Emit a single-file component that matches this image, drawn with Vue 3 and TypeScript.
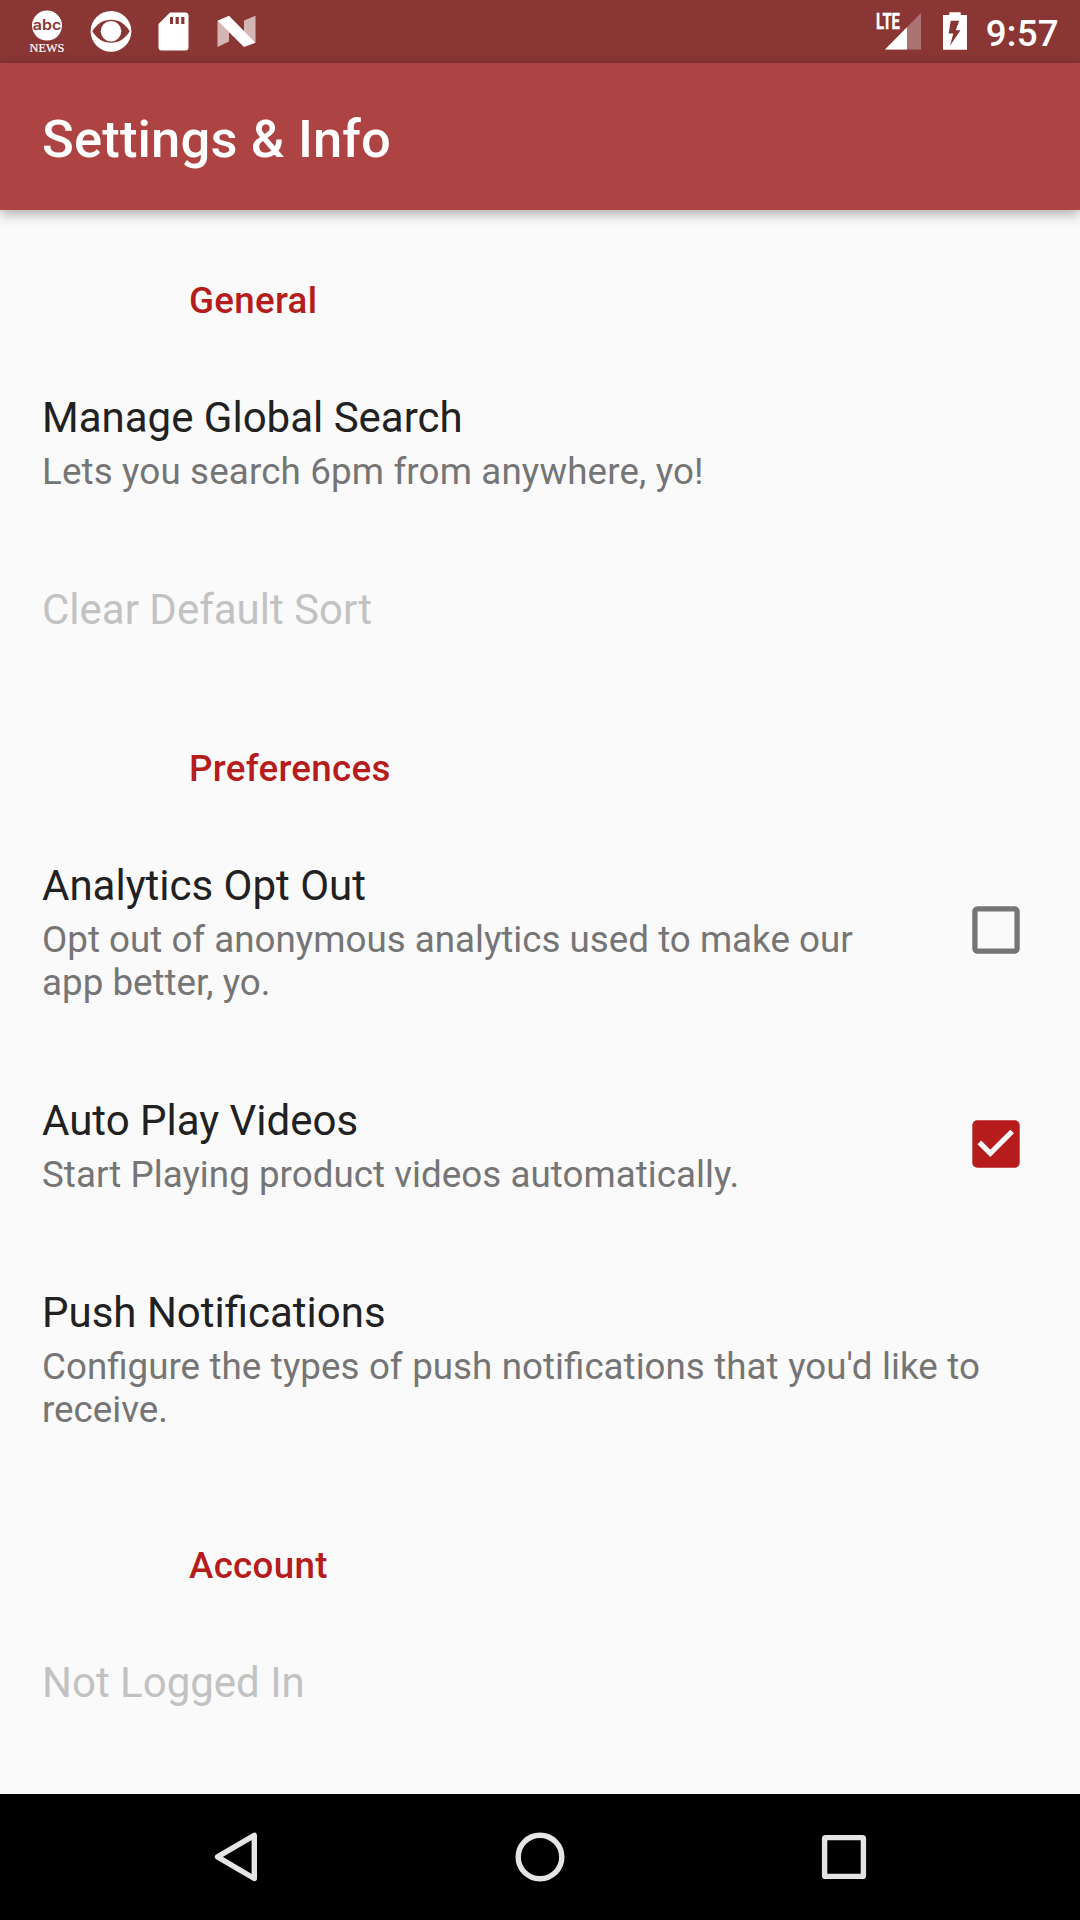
<script setup lang="ts">
interface Preference {
  title: string
  summary?: string
  disabled?: boolean
  checked?: boolean
  letterSpacing?: string
  wordSpacing?: string
}

interface Category {
  name: string
  items: Preference[]
}

const categories: Category[] = [
  {
    name: 'General',
    items: [
      {
        title: 'Manage Global Search',
        summary: 'Lets you search 6pm from anywhere, yo!',
        letterSpacing: '0.14px',
      },
      { title: 'Clear Default Sort', disabled: true },
    ],
  },
  {
    name: 'Preferences',
    items: [
      {
        title: 'Analytics Opt Out',
        summary: 'Opt out of anonymous analytics used to make our app better, yo.',
        checked: false,
      },
      {
        title: 'Auto Play Videos',
        summary: 'Start Playing product videos automatically.',
        checked: true,
        letterSpacing: '0.03px',
      },
      {
        title: 'Push Notifications',
        summary: "Configure the types of push notifications that you'd like to receive.",
        wordSpacing: '0.42px',
      },
    ],
  },
  {
    name: 'Account',
    items: [{ title: 'Not Logged In', disabled: true }],
  },
]

const hasCheckbox = (item: Preference): boolean => 'checked' in item
</script>

<template>
  <div class="screen">
    <header class="status-bar">
      <div class="notifications">
        <svg class="abc" width="44" height="63" viewBox="-4 0 44 63">
          <circle cx="18" cy="25.6" r="15" fill="#fff" />
          <text x="3.7" y="29.8" class="abc-word" textLength="28.6" lengthAdjust="spacingAndGlyphs">abc</text>
          <text x="0.6" y="51.7" class="news-word" textLength="34.8" lengthAdjust="spacingAndGlyphs">NEWS</text>
        </svg>
        <svg class="eye" width="42" height="63" viewBox="0 0 42 63">
          <circle cx="21" cy="31.3" r="20.4" fill="#fff" />
          <path d="M2.3 31.3C7 23.5 13.5 19.8 21 19.8s14 3.7 18.7 11.500C35 39.100 28.500 42.800 21 42.800S7 39.100 2.300 31.300z" class="cut" />
          <circle cx="21" cy="31.300" r="10.300" fill="#fff" />
        </svg>
        <svg class="card" width="31" height="63" viewBox="0 0 31 63">
          <path d="M12 12.500h15.500a3 3 0 0 1 3 3v32a3 3 0 0 1-3 3H3.500a3 3 0 0 1-3-3V24z" fill="#fff" />
          <path d="M12 17h3v7h-3zM17.600 17h3.200v7h-3.200zM23.200 17h3.200v7h-3.200z" class="cut" />
        </svg>
        <svg class="nougat" width="39" height="63" viewBox="0 0 39 63">
          <path d="M.5 20.500L12 32v9.500L.5 47zM38.500 15.800v27L27 32V20.500z" fill="#d5b4b4" />
          <path d="M.5 20.700L12 15.800l26.500 27L27 47z" fill="#fff" />
        </svg>
      </div>
      <div class="system">
        <svg width="50" height="63" viewBox="-4 0 50 63">
          <path d="M45 13v36.500H9z" fill="#fff" opacity=".3" />
          <path d="M31 27.200v22.300H9z" fill="#fff" />
          <text x="0" y="29" class="lte" textLength="24" lengthAdjust="spacingAndGlyphs">LTE</text>
        </svg>
        <svg class="battery" width="24" height="63" viewBox="0 0 24 63">
          <path d="M6.300 12.300h11.400V15H24v34.800H0V15h6.300z" fill="#fff" />
          <path d="M7.700 20.800h8.500l-3.400 9.500h4.700L7 45.700l3.300-12.200H5.700z" class="cut" />
        </svg>
        <span class="clock">9:57</span>
      </div>
    </header>

    <div class="app-bar">
      <h1>Settings &amp; Info</h1>
    </div>

    <main class="preferences">
      <section v-for="category in categories" :key="category.name">
        <h2>{{ category.name }}</h2>
        <div v-for="item in category.items" :key="item.title" class="row" :class="{ disabled: item.disabled }">
          <div class="text">
            <div class="title">{{ item.title }}</div>
            <div
              v-if="item.summary"
              class="summary"
              :style="{ letterSpacing: item.letterSpacing, wordSpacing: item.wordSpacing }"
            >{{ item.summary }}</div>
          </div>
          <svg v-if="hasCheckbox(item)" class="checkbox" width="48" height="48" viewBox="0 0 48 48">
            <template v-if="item.checked">
              <rect x=".3" y=".3" width="47.400" height="47.400" rx="5" fill="#b71c1c" />
              <path d="M7.300 22.300L18.300 33.300 40.100 11.500" fill="none" stroke="#fafafa" stroke-width="5.200" />
            </template>
            <rect v-else x="2.900" y="2.900" width="42.200" height="42.200" rx="2.600" fill="none" stroke="#757575" stroke-width="5.300" />
          </svg>
        </div>
      </section>
    </main>

    <nav class="nav-bar">
      <svg width="50" height="50" viewBox="0 0 50 50">
        <path d="M43.300 3.300v43.200L6.500 24.900z" />
      </svg>
      <svg width="50" height="50" viewBox="0 0 50 50">
        <circle cx="25" cy="25" r="21.800" />
      </svg>
      <svg width="50" height="50" viewBox="0 0 50 50">
        <rect x="5.600" y="5.600" width="38.800" height="38.800" rx="1" />
      </svg>
    </nav>
  </div>
</template>

<style>
body {
  margin: 0;
  background: #fafafa;
}
</style>

<style scoped>
.screen {
  width: 1080px;
  height: 1920px;
  display: flex;
  flex-direction: column;
  overflow: hidden;
  background: #fafafa;
  font-family: Roboto, sans-serif;
}

svg {
  display: block;
  flex: none;
  overflow: visible;
}

.status-bar {
  height: 63px;
  flex: none;
  display: flex;
  justify-content: space-between;
  background: #8a3635;
}

.notifications,
.system {
  display: flex;
}

.notifications {
  padding-left: 25px;
}

.eye {
  margin-left: 20.500px;
}

.card {
  margin-left: 26.500px;
}

.nougat {
  margin-left: 28px;
}

.cut {
  fill: #8a3635;
}

.abc-word {
  font: 600 14.500px Inter, sans-serif;
  fill: #8a3635;
}

.news-word {
  font: 13.200px 'Liberation Serif', serif;
  fill: #fff;
  stroke: #fff;
  stroke-width: 0.200;
}

.lte {
  font: 700 22px Roboto, sans-serif;
  fill: #fff;
  stroke: #fff;
  stroke-width: 0.400;
}

.system {
  padding-right: 21px;
}

.battery {
  margin-left: 21px;
}

.clock {
  margin-left: 19px;
  padding-top: 12px;
  font-size: 36.750px;
  line-height: 43px;
  font-weight: 500;
  letter-spacing: 0.250px;
  color: #fff;
}

.app-bar {
  position: relative;
  height: 147px;
  flex: none;
  display: flex;
  align-items: center;
  padding: 0 42px;
  box-sizing: border-box;
  background: #ad4343;
  box-shadow: 0 4px 12px rgba(0, 0, 0, 0.32);
}

h1 {
  margin: 5px 0 0;
  font-size: 52.500px;
  line-height: 62px;
  font-weight: 500;
  letter-spacing: 0.170px;
  color: #fff;
}

.preferences {
  flex: 1;
  min-height: 0;
  padding-top: 6px;
}

h2 {
  margin: 0;
  padding: 63px 42px 29px 189px;
  font-size: 36.750px;
  line-height: 43px;
  font-weight: 500;
  letter-spacing: 0.280px;
  color: #b71c1c;
}

.row {
  display: flex;
  align-items: center;
  gap: 60px;
  padding: 42px 60px 50px 42px;
}

.text {
  flex: 1;
}

.title {
  font-size: 42px;
  line-height: 49px;
  color: #212121;
}

.summary {
  margin-top: 8px;
  font-size: 36.750px;
  line-height: 43px;
  color: #757575;
}

.disabled .title {
  color: #c2c2c2;
}

.checkbox {
  margin-bottom: 5px;
}

.nav-bar {
  height: 126px;
  flex: none;
  display: flex;
  justify-content: space-between;
  align-items: center;
  padding: 0 211px;
  background: #000;
}

.nav-bar svg {
  fill: none;
  stroke: #e5e5e5;
  stroke-width: 5.400;
  stroke-linejoin: round;
}
</style>
